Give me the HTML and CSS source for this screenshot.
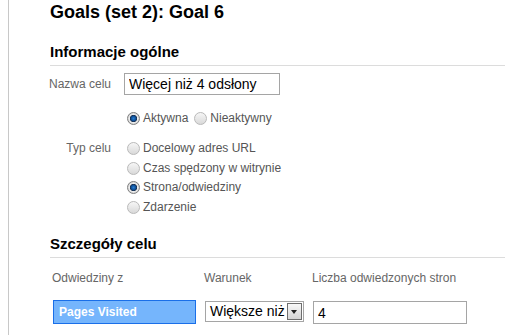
FILE: index.html
```html
<!DOCTYPE html>
<html lang="pl">

<head>
    <meta charset="UTF-8">
    <meta name="viewport" content="width=device-width, initial-scale=1.0">
    <title>Goals (set 2): Goal 6</title>
    <link rel="stylesheet" href="styles.css">
</head>

<body>
    <div class="page">
        <h1 class="title">Goals (set 2): Goal 6</h1>

        <h2 class="section-title">Informacje ogólne</h2>
        <div class="form-row">
            <div class="label">Nazwa celu</div>
            <input type="text" class="text-input name-input" value="Więcej niż 4 odsłony">
        </div>
        <div class="form-row status-row">
            <div class="label"></div>
            <div class="radio-inline">
                <span class="radio checked"></span><span class="radio-text">Aktywna</span>
                <span class="radio"></span><span class="radio-text">Nieaktywny</span>
            </div>
        </div>
        <div class="form-row type-row">
            <div class="label type-label">Typ celu</div>
            <div class="radio-list">
                <div class="radio-item"><span class="radio"></span><span class="radio-text">Docelowy adres URL</span></div>
                <div class="radio-item"><span class="radio"></span><span class="radio-text">Czas spędzony w witrynie</span></div>
                <div class="radio-item"><span class="radio checked"></span><span class="radio-text">Strona/odwiedziny</span></div>
                <div class="radio-item"><span class="radio"></span><span class="radio-text">Zdarzenie</span></div>
            </div>
        </div>

        <h2 class="section-title details-title">Szczegóły celu</h2>
        <div class="details">
            <div class="col-head">Odwiedziny z</div>
            <div class="col-head">Warunek</div>
            <div class="col-head">Liczba odwiedzonych stron</div>
            <div class="metric">Pages Visited</div>
            <div class="select">
                <span class="select-value">Większe niż</span>
                <span class="select-arrow"></span>
            </div>
            <input type="text" class="text-input count-input" value="4">
        </div>
    </div>
</body>

</html>
```

FILE: styles.css
```css
body {
    margin: 0;
    font-family: "Liberation Sans", Arial, sans-serif;
    color: #000;
    background: #fff;
}

.page {
    margin-left: 8px;
    border-left: 1px solid #c8c8c8;
    padding-left: 41px;
    height: 335px;
    box-sizing: border-box;
    overflow: hidden;
}

.title {
    margin: 0;
    padding-top: 1px;
    font-size: 18px;
    line-height: 22px;
    font-weight: bold;
}

.section-title {
    margin: 19px 0 0;
    font-size: 15px;
    line-height: 20px;
    font-weight: bold;
    padding-bottom: 3px;
    border-bottom: 1px solid #dcdcdc;
}

.form-row {
    display: flex;
    gap: 12px;
    margin-top: 7px;
}

.label {
    width: 61px;
    flex-shrink: 0;
    display: flex;
    justify-content: flex-end;
    white-space: nowrap;
    font-size: 12px;
    color: #666;
    line-height: 22px;
}

.type-label {
    line-height: 19px;
}

.text-input {
    font-family: "Liberation Sans", Arial, sans-serif;
    font-size: 14px;
    color: #000;
    border: 1px solid #a5a5a5;
    padding: 0 4px;
    height: 22px;
    box-sizing: border-box;
    margin: 0;
    outline: none;
}

.name-input {
    width: 156px;
    margin-left: 1px;
}

.status-row {
    margin-top: 14px;
}

.type-row {
    margin-top: 11px;
}

.radio-inline {
    display: flex;
    align-items: center;
    padding-left: 4px;
}

.radio-inline .radio-text {
    margin-right: 6px;
}

.radio-list {
    display: flex;
    flex-direction: column;
    padding-left: 4px;
}

.radio-item {
    display: flex;
    align-items: center;
    height: 19.5px;
}

.radio {
    width: 13px;
    height: 13px;
    border-radius: 50%;
    border: 1px solid #b9b9b9;
    background: linear-gradient(#f6f6f6, #d9d9d9);
    box-sizing: border-box;
    margin-right: 3px;
}

.radio.checked {
    border-color: #808080;
    background: radial-gradient(circle, #2a7fd0 0, #0b4a92 2.5px, #1b2f4a 3.3px, #ececec 4px, #cfcfcf 6px);
}

.radio-text {
    font-size: 12px;
    color: #555;
    line-height: 19px;
}

.details-title {
    margin-top: 17px;
}

.details {
    display: grid;
    grid-template-columns: 152px 108px 160px;
    margin-top: 9px;
    align-items: start;
}

.col-head {
    font-size: 12px;
    color: #666;
    line-height: 22px;
    padding-left: 2px;
}

.metric {
    margin-top: 11px;
    margin-left: 3px;
    width: 143px;
    height: 24px;
    box-sizing: border-box;
    background: #75b5fc;
    border: 1px solid #1a6fe8;
    color: #fff;
    font-size: 12px;
    font-weight: bold;
    line-height: 22px;
    padding-left: 5px;
}

.select {
    margin-top: 12px;
    margin-left: 3px;
    width: 99px;
    height: 21px;
    box-sizing: border-box;
    border: 1px solid #a5a5a5;
    display: flex;
    align-items: center;
    justify-content: space-between;
    padding: 0 1px 0 4px;
}

.select-value {
    font-size: 14px;
    line-height: 19px;
}

.select-arrow {
    width: 15px;
    height: 17px;
    box-sizing: border-box;
    border: 1px solid #6e6e6e;
    background: linear-gradient(#f8f8f8, #d4d4d4);
    position: relative;
}

.select-arrow::after {
    content: "";
    position: absolute;
    left: 3px;
    top: 6px;
    border-left: 3.5px solid transparent;
    border-right: 3.5px solid transparent;
    border-top: 4px solid #222;
}

.count-input {
    margin-top: 12px;
    margin-left: 3px;
    width: 154px;
    height: 23px;
}
```
